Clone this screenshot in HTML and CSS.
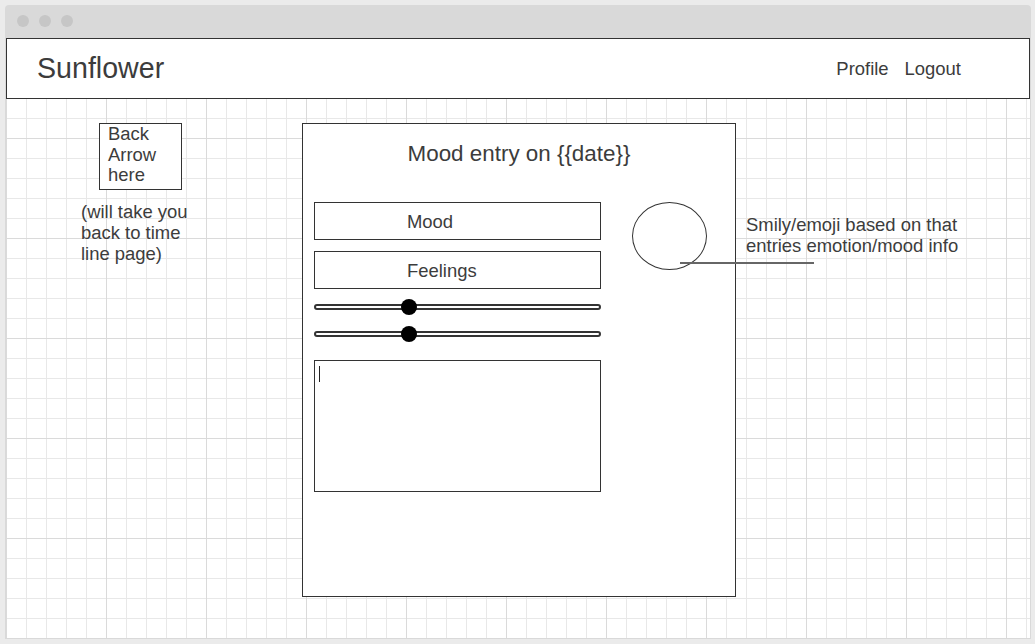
FILE: index.html
```html
<!DOCTYPE html>
<html lang="en">
<head>
<meta charset="utf-8">
<title>Sunflower – Mood entry</title>
<link rel="stylesheet" href="styles.css">
</head>
<body>
<div class="window">
  <div class="chrome">
    <span class="dot"></span><span class="dot"></span><span class="dot"></span>
  </div>
  <div class="content">
    <header class="topbar">
      <div class="brand">Sunflower</div>
      <nav class="nav">
        <a class="nav-link">Profile</a>
        <a class="nav-link">Logout</a>
      </nav>
    </header>
    <main class="canvas">
      <div class="side">
        <div class="back-box">Back<br>Arrow<br>here</div>
        <p class="side-note">(will take you<br>back to time<br>line page)</p>
      </div>
      <section class="card">
        <h1 class="card-title">Mood entry on {{date}}</h1>
        <div class="card-body">
          <div class="form">
            <div class="field">Mood</div>
            <div class="field field-gap">Feelings</div>
            <div class="slider slider-first"><span class="track"></span><span class="thumb" style="left: 33.1%"></span></div>
            <div class="slider slider-second"><span class="track"></span><span class="thumb" style="left: 33.1%"></span></div>
            <div class="textarea"><span class="caret"></span></div>
          </div>
          <div class="emoji"></div>
        </div>
        <span class="connector"></span>
      </section>
      <p class="annotation">Smily/emoji based on that<br>entries emotion/mood info</p>
    </main>
  </div>
</div>
</body>
</html>
```
FILE: styles.css
```css
* { box-sizing: border-box; }

html, body {
  margin: 0;
  padding: 0;
  background: #ebebeb;
  font-family: "Liberation Sans", Arial, sans-serif;
  color: #3c3c3c;
}

.window {
  margin: 5px 0 0 5px;
  width: 1026px;
  background: #d9d9d9;
  border-radius: 4px 4px 0 0;
  padding: 0 1px 1px 1px;
}

.chrome {
  height: 33px;
  display: flex;
  align-items: center;
  gap: 10px;
  padding-left: 12px;
  padding-bottom: 1px;
  margin-left: -1px;
}

.dot {
  width: 12px;
  height: 12px;
  border-radius: 50%;
  background: #c6c6c6;
}

.content {
  width: 1024px;
  height: 600px;
  background-color: #fff;
  background-image:
    linear-gradient(#dadada 1px, transparent 1px),
    linear-gradient(90deg, #dadada 1px, transparent 1px),
    linear-gradient(#e8e8e8 1px, transparent 1px),
    linear-gradient(90deg, #e8e8e8 1px, transparent 1px);
  background-size: 100px 100px, 100px 100px, 20px 20px, 20px 20px;
  background-position: 0 0;
}

.topbar {
  height: 61px;
  background: #fff;
  border: 1px solid #333;
  display: flex;
  align-items: center;
  justify-content: space-between;
  padding: 0 68px 0 30px;
}

.brand {
  font-size: 28.6px;
}

.nav {
  display: flex;
  gap: 16px;
}

.nav-link {
  font-size: 18.45px;
}

.canvas {
  display: flex;
  align-items: flex-start;
  padding: 24px 0 0 75px;
}

.side {
  width: 121px;
  flex: none;
  font-size: 18.45px;
  line-height: 21px;
}

.back-box {
  margin-left: 18px;
  width: 83px;
  height: 67px;
  border: 1px solid #333;
  padding: 0 0 0 8px;
  line-height: 20.5px;
  background: #fff;
}

.side-note {
  margin: 11px 0 0 0;
}

.card {
  position: relative;
  margin-left: 100px;
  width: 434px;
  height: 474px;
  flex: none;
  background: #fff;
  border: 1px solid #333;
  padding: 16px 11px 0 11px;
}

.card-title {
  margin: 0;
  font-weight: normal;
  font-size: 22.4px;
  line-height: 27px;
  text-align: center;
}

.card-body {
  display: flex;
  align-items: flex-start;
  margin-top: 35px;
}

.form {
  width: 287px;
  flex: none;
}

.field {
  height: 38px;
  border: 1px solid #333;
  font-size: 18.45px;
  line-height: 38px;
  padding-left: 92px;
}

.field-gap {
  margin-top: 11px;
}

.slider {
  position: relative;
  height: 16px;
}

.slider-first { margin-top: 10px; }
.slider-second { margin-top: 11px; }

.track {
  position: absolute;
  left: 0;
  right: 0;
  top: 5px;
  height: 6px;
  border: 2px solid #333;
  border-radius: 3px;
  background: #fff;
}

.thumb {
  position: absolute;
  top: 0;
  width: 16px;
  height: 16px;
  border-radius: 50%;
  background: #000;
  transform: translateX(-50%);
}

.textarea {
  margin-top: 18px;
  height: 132px;
  border: 1px solid #333;
  padding: 5px 0 0 4px;
}

.caret {
  display: block;
  width: 1px;
  height: 16px;
  background: #222;
}

.emoji {
  margin-left: 31px;
  width: 75px;
  height: 68px;
  border: 1px solid #333;
  border-radius: 50%;
}

.connector {
  position: absolute;
  left: 377px;
  top: 138px;
  width: 134px;
  height: 2px;
  background: #666;
}

.annotation {
  margin: 91px 0 0 10px;
  font-size: 18.45px;
  line-height: 21px;
  white-space: nowrap;
}
```
